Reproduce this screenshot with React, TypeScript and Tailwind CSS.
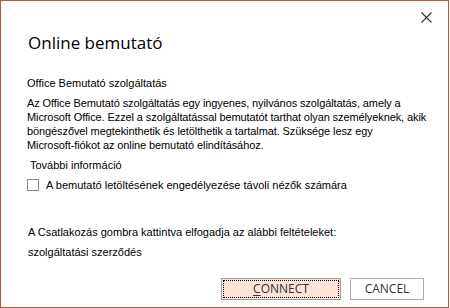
import { useState } from 'react'

export default function App() {
  const [allowDownload, setAllowDownload] = useState(false)

  return (
    <div className="h-[308px] w-[450px] bg-white">
      <div className="relative flex h-[308px] w-[449px] flex-col border border-[#c0533a] bg-white text-black">
        <button
          type="button"
          aria-label="Close"
          className="absolute right-[16px] top-[10px] flex h-[12px] w-[12px] items-center justify-center"
        >
          <svg width="11" height="11" viewBox="0 0 11 11" fill="none" stroke="#333" strokeWidth="1.1">
            <path d="M0.5 0.5 L10.5 10.5 M10.5 0.5 L0.5 10.5" />
          </svg>
        </button>

        <h1 className="ml-[27px] mt-[30px] font-['Open_Sans',sans-serif] text-[17px] leading-[24px] font-normal">
          Online bemutató
        </h1>

        <div className="ml-[26px] mt-[21px] font-['Liberation_Sans',Arial,sans-serif] text-[11px] leading-[14px]">
          <p>Office Bemutató szolgáltatás</p>
          <p className="mt-[6px] whitespace-nowrap tracking-[-0.1px]">
            Az Office Bemutató szolgáltatás egy ingyenes, nyilvános szolgáltatás, amely a
            <br />
            Microsoft Office. Ezzel a szolgáltatással bemutatót tarthat olyan személyeknek, akik
            <br />
            böngészővel megtekinthetik és letölthetik a tartalmat. Szüksége lesz egy
            <br />
            Microsoft-fiókot az online bemutató elindításához.
          </p>
          <p className="ml-[3px] mt-[6px]">További információ</p>
          <label className="mt-[6px] flex items-center gap-[7px]">
            <input
              type="checkbox"
              checked={allowDownload}
              onChange={(e) => setAllowDownload(e.target.checked)}
              className="h-[12px] w-[12px] appearance-none border border-[#8a8a8a] bg-white checked:bg-[#0078d7]"
            />
            <span>A bemutató letöltésének engedélyezése távoli nézők számára</span>
          </label>
        </div>

        <div className="ml-[27px] mt-[30px] font-['Liberation_Sans',Arial,sans-serif] text-[11px] leading-[20px]">
          <p>A Csatlakozás gombra kattintva elfogadja az alábbi feltételeket:</p>
          <p>szolgáltatási szerződés</p>
        </div>

        <div className="mr-[24px] mt-[16px] flex justify-end gap-[9px] font-['Open_Sans',sans-serif] text-[12px] text-[#333]">
          <button
            type="button"
            className="h-[22px] w-[120px] border border-[#a0a0a0] bg-[#fde3da] p-[1px]"
          >
            <span className="flex h-full w-full items-center justify-center border border-dotted border-black">
              <span className="underline decoration-1 underline-offset-2">C</span>ONNECT
            </span>
          </button>
          <button type="button" className="h-[22px] w-[74px] border border-[#adadad] bg-white">
            CANCEL
          </button>
        </div>
      </div>
    </div>
  )
}
